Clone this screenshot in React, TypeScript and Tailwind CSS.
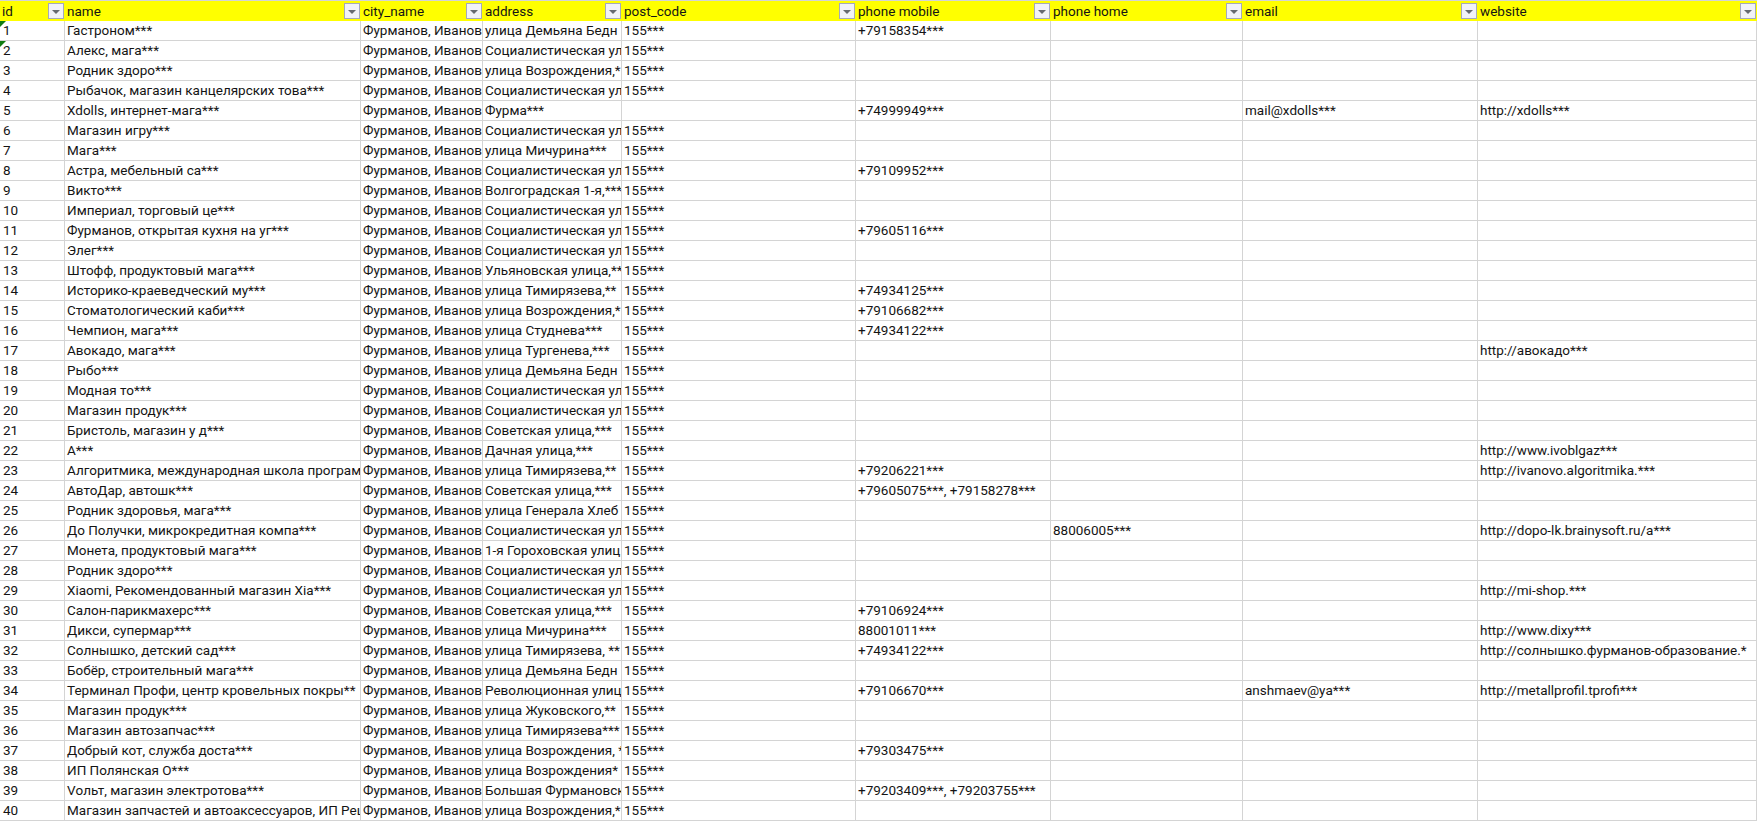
const S = "Социалистическая ул";
const B = "улица Демьяна Бедн";
const V = "улица Возрождения,*";
const T = "улица Тимирязева,**";
const C = "Фурманов, Иванов";

const columns = ["id", "name", "city_name", "address", "post_code", "phone mobile", "phone home", "email", "website"];

type Row = { name: string; address: string; post?: string; mobile?: string; home?: string; email?: string; site?: string };

const rows: Row[] = [
  { name: "Гастроном***", address: B, mobile: "+79158354***" },
  { name: "Алекс, мага***", address: S },
  { name: "Родник здоро***", address: V },
  { name: "Рыбачок, магазин канцелярских това***", address: S },
  { name: "Xdolls, интернет-мага***", address: "Фурма***", post: "", mobile: "+74999949***", email: "mail@xdolls***", site: "http://xdolls***" },
  { name: "Магазин игру***", address: S },
  { name: "Мага***", address: "улица Мичурина***" },
  { name: "Астра, мебельный са***", address: S, mobile: "+79109952***" },
  { name: "Викто***", address: "Волгоградская 1-я,***" },
  { name: "Империал, торговый це***", address: S },
  { name: "Фурманов, открытая кухня на уг***", address: S, mobile: "+79605116***" },
  { name: "Элег***", address: S },
  { name: "Штофф, продуктовый мага***", address: "Ульяновская улица,**" },
  { name: "Историко-краеведческий му***", address: T, mobile: "+74934125***" },
  { name: "Стоматологический каби***", address: V, mobile: "+79106682***" },
  { name: "Чемпион, мага***", address: "улица Студнева***", mobile: "+74934122***" },
  { name: "Авокадо, мага***", address: "улица Тургенева,***", site: "http://авокадо***" },
  { name: "Рыбо***", address: B },
  { name: "Модная то***", address: S },
  { name: "Магазин продук***", address: S },
  { name: "Бристоль, магазин у д***", address: "Советская улица,***" },
  { name: "А***", address: "Дачная улица,***", site: "http://www.ivoblgaz***" },
  { name: "Алгоритмика, международная школа програм", address: T, mobile: "+79206221***", site: "http://ivanovo.algoritmika.***" },
  { name: "АвтоДар, автошк***", address: "Советская улица,***", mobile: "+79605075***, +79158278***" },
  { name: "Родник здоровья, мага***", address: "улица Генерала Хлеб" },
  { name: "До Получки, микрокредитная компа***", address: S, home: "88006005***", site: "http://dopo-lk.brainysoft.ru/a***" },
  { name: "Монета, продуктовый мага***", address: "1-я Гороховская улиц" },
  { name: "Родник здоро***", address: S },
  { name: "Xiaomi, Рекомендованный магазин Xia***", address: S, site: "http://mi-shop.***" },
  { name: "Салон-парикмахерс***", address: "Советская улица,***", mobile: "+79106924***" },
  { name: "Дикси, супермар***", address: "улица Мичурина***", mobile: "88001011***", site: "http://www.dixy***" },
  { name: "Солнышко, детский сад***", address: "улица Тимирязева, **", mobile: "+74934122***", site: "http://солнышко.фурманов-образование.*" },
  { name: "Бобёр, строительный мага***", address: B },
  { name: "Терминал Профи, центр кровельных покры**", address: "Революционная улиц", mobile: "+79106670***", email: "anshmaev@ya***", site: "http://metallprofil.tprofi***" },
  { name: "Магазин продук***", address: "улица Жуковского,**" },
  { name: "Магазин автозапчас***", address: "улица Тимирязева***" },
  { name: "Добрый кот, служба доста***", address: "улица Возрождения, *", mobile: "+79303475***" },
  { name: "ИП Полянская О***", address: "улица Возрождения*" },
  { name: "Vольт, магазин электротова***", address: "Большая Фурмановск", mobile: "+79203409***, +79203755***" },
  { name: "Магазин запчастей и автоаксессуаров, ИП Реш", address: V },
];

const gridCols = "grid grid-cols-[65px_296px_122px_139px_234px_195px_192px_235px_279px]";

function FilterButton() {
  return (
    <div className="flex h-4 w-4 shrink-0 items-center justify-center border border-[#a4a9bb] bg-[#f1f2f7]">
      <div className="mt-px h-0 w-0 border-x-[4px] border-t-[4px] border-x-transparent border-t-[#666a70]" />
    </div>
  );
}

function Cell({ children, first }: { children?: React.ReactNode; first?: boolean }) {
  return (
    <div className={`relative overflow-hidden whitespace-nowrap border-r border-[#d4d4d4] ${first ? "pl-[3px]" : "pl-[2px]"}`}>
      {children}
    </div>
  );
}

export default function App() {
  return (
    <div className="h-[821px] w-[1757px] overflow-hidden bg-white font-['Roboto',sans-serif] text-[13.5px] leading-[19px] text-[#141414]">
      {/* Header row with the autofilter buttons */}
      <div className={`${gridCols} h-[21px] border-t border-[#d4d4d4] bg-[#ffff00]`}>
        {columns.map((col) => (
          <div key={col} className="flex items-center justify-between pl-[2px] pr-px">
            <span>{col}</span>
            <FilterButton />
          </div>
        ))}
      </div>

      {rows.map((row, i) => (
        <div key={i} className={`${gridCols} h-5 border-b border-[#d4d4d4]`}>
          <Cell first>
            {i < 2 && (
              <div className="absolute left-0 top-0 h-0 w-0 border-r-[6px] border-t-[6px] border-r-transparent border-t-[#107c10]" />
            )}
            {i + 1}
          </Cell>
          <Cell>{row.name}</Cell>
          <Cell>{C}</Cell>
          <Cell>{row.address}</Cell>
          <Cell>{row.post ?? "155***"}</Cell>
          <Cell>{row.mobile}</Cell>
          <Cell>{row.home}</Cell>
          <Cell>{row.email}</Cell>
          <Cell>{row.site}</Cell>
        </div>
      ))}
    </div>
  );
}
